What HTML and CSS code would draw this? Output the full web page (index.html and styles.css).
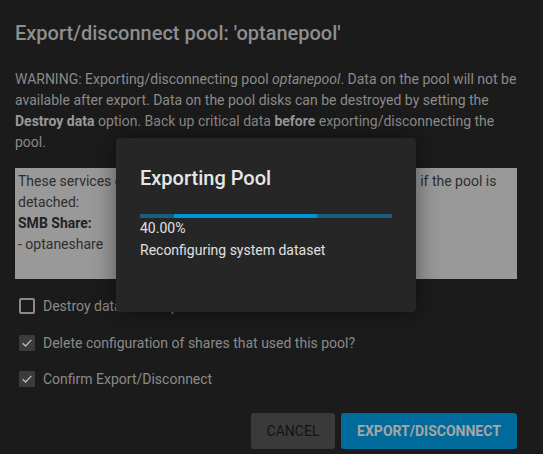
FILE: index.html
```html
<!DOCTYPE html>
<html>
<head>
<meta charset="utf-8">
<link rel="stylesheet" href="styles.css">
</head>
<body>
<div class="dialog">
  <h1 class="title">Export/disconnect pool: 'optanepool'</h1>
  <p class="warning">WARNING: Exporting/disconnecting pool <i>optanepool</i>. Data on the pool will not be available after export. Data on the pool disks can be destroyed by setting the <b>Destroy data</b> option. Back up critical data <b>before</b> exporting/disconnecting the pool.</p>
  <div class="services">
    These services depend on pool optanepool and will be disrupted if the pool is detached:<br>
    <b>SMB Share:</b><br>
    - optaneshare
  </div>
  <div class="checks">
    <label class="check"><span class="box"></span>Destroy data on this pool?</label>
    <label class="check"><span class="box on"><svg viewBox="0 0 16 16" width="16" height="16"><path d="M3.6 8.2 L6.6 11 L12.4 4.9" fill="none" stroke="#bdbdbd" stroke-width="1.3"/></svg></span>Delete configuration of shares that used this pool?</label>
    <label class="check"><span class="box on"><svg viewBox="0 0 16 16" width="16" height="16"><path d="M3.6 8.2 L6.6 11 L12.4 4.9" fill="none" stroke="#bdbdbd" stroke-width="1.3"/></svg></span>Confirm Export/Disconnect</label>
  </div>
  <div class="actions">
    <div class="btn btn-cancel"><span class="cancel-label">CANCEL</span></div>
    <div class="btn btn-primary"><span class="primary-label">EXPORT/DISCONNECT</span></div>
  </div>
</div>
<div class="job">
  <h2 class="job-title">Exporting Pool</h2>
  <div class="bar"><div class="fill"></div></div>
  <div class="pct">40.00%</div>
  <div class="desc">Reconfiguring system dataset</div>
</div>
</body>
</html>
```
FILE: styles.css
```css
html, body {
  margin: 0;
  padding: 0;
  background: #1b1b1b;
  font-family: Roboto, "Liberation Sans", sans-serif;
  width: 543px;
  height: 454px;
  overflow: hidden;
}
.dialog {
  padding: 22px 26px 0 15px;
  width: 502px;
}
.title {
  margin: 0;
  font-size: 20px;
  font-weight: 500;
  color: #8e8e8e;
  line-height: 22px;
}
.warning {
  margin: 24.5px 0 0 0;
  font-size: 14px;
  line-height: 21px;
  color: #8a8a8a;
}
.warning b { color: #999; font-weight: 700; }
.services {
  margin-top: 15.5px;
  background: #999999;
  color: #2e2e2e;
  font-size: 14px;
  line-height: 21px;
  padding: 3px 0 0 3px;
  height: 108px;
}
.services b { font-weight: 700; color: #222; }
.checks {
  display: flex;
  flex-direction: column;
  gap: 15.5px;
  margin-top: 16.5px;
  padding-left: 4px;
}
.check {
  display: flex;
  align-items: center;
  gap: 8px;
  font-size: 14px;
  color: #8a8a8a;
  height: 21px;
}
.box {
  width: 12px;
  height: 12px;
  border: 2px solid #8a8a8a;
  border-radius: 2px;
  display: block;
}
.box.on {
  border: none;
  width: 16px;
  height: 16px;
  background: #3b3b3b;
  border-radius: 1px;
  display: flex;
  align-items: center;
  justify-content: center;
}
.actions {
  display: flex;
  justify-content: flex-end;
  gap: 6px;
  margin-top: 23.5px;
}
.btn {
  height: 36px;
  border-radius: 3px;
  font-size: 14px;
  display: flex;
  align-items: center;
  justify-content: center;
}
.btn-cancel {
  background: #3a3a3a;
  width: 84px;
}
.cancel-label {
  color: #131313;
}
.btn-primary {
  background: #006b9a;
  width: 176px;
}
.primary-label {
  color: #a6a6a6;
  font-weight: 700;
}
.job {
  position: absolute;
  left: 116px;
  top: 138px;
  width: 300px;
  height: 174px;
  box-sizing: border-box;
  background: #262626;
  border-radius: 4px;
  padding: 28px 24px 0 24px;
  box-shadow: 0 0 24px rgba(0,0,0,0.45);
}
.job-title {
  margin: 0;
  font-size: 20px;
  font-weight: 500;
  color: #e6e6e6;
  line-height: 24px;
}
.bar {
  margin-top: 24px;
  height: 4px;
  width: 252px;
  background: #1b5f7f;
  position: relative;
}
.fill {
  position: absolute;
  left: 34px;
  top: 0;
  width: 143px;
  height: 4px;
  background: #0096d6;
}
.pct {
  margin-top: 1px;
  font-size: 14px;
  line-height: 19px;
  color: #e0e0e0;
}
.desc {
  margin-top: 2px;
  font-size: 14px;
  line-height: 20px;
  color: #e0e0e0;
}
```
